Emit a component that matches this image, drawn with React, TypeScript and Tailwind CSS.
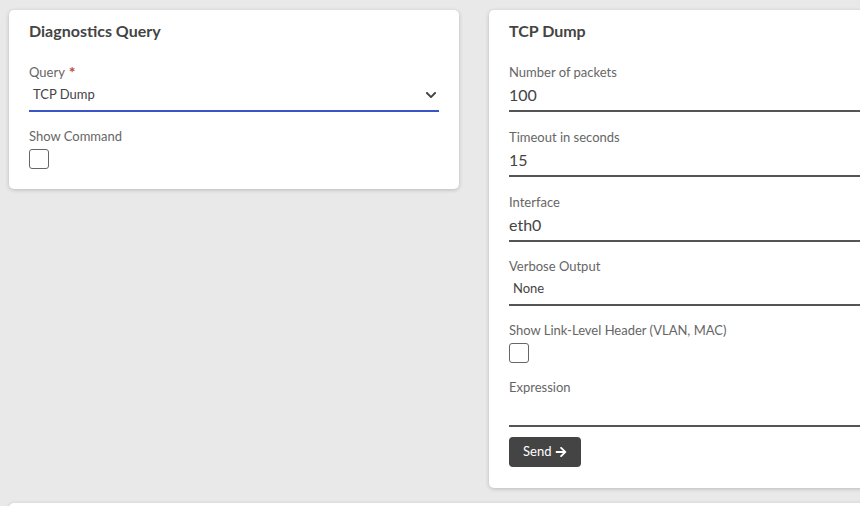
import React from 'react';
import { FaArrowRight, FaChevronDown } from 'react-icons/fa';

const font = { fontFamily: 'Lato, "Noto Sans", sans-serif' };

function Label({ text, required }: { text: string; required?: boolean }) {
  return (
    <div className="flex h-[18px] items-center text-[13px] leading-[18px] text-[#666]">
      {text}
      {required && <span className="ml-1 text-[16px] font-bold leading-[18px] text-[#b94a48]">*</span>}
    </div>
  );
}

function TextField({ label, value, className = '' }: { label: string; value: string; className?: string }) {
  return (
    <div className={className}>
      <Label text={label} />
      <div className="flex h-[31px] items-center border-b-2 border-[#555] pb-[2px] text-[16px] text-[#444]">
        {value}
      </div>
    </div>
  );
}

function SelectField({
  label,
  value,
  required,
  focused,
  className = '',
}: {
  label: string;
  value: string;
  required?: boolean;
  focused?: boolean;
  className?: string;
}) {
  return (
    <div className={className}>
      <Label text={label} required={required} />
      <div
        className={
          'flex h-[31px] items-center justify-between border-b-2 pb-[2px] pl-1 pr-[2px] text-[13px] text-[#444] ' +
          (focused ? 'border-[#3b55c9]' : 'border-[#555]')
        }
      >
        <span>{value}</span>
        {focused && <FaChevronDown className="text-[12px] text-[#444]" />}
      </div>
    </div>
  );
}

function Checkbox({ label, className = '' }: { label: string; className?: string }) {
  return (
    <div className={className}>
      <Label text={label} />
      <div className="mt-1 h-5 w-5 rounded-[3px] border border-[#666] bg-white" />
    </div>
  );
}

export default function App() {
  return (
    <div className="h-[506px] w-[860px] overflow-hidden bg-[#e9e9e9]" style={font}>
      <div className="flex items-start gap-[30px] pl-[9px] pt-[10px]">
        <div className="w-[450px] shrink-0 rounded-[5px] bg-white px-5 pb-5 pt-3 shadow-[0_1px_4px_rgba(0,0,0,0.2)]">
          <h2 className="text-[16px] font-bold leading-[18px] text-[#444]">Diagnostics Query</h2>
          <div className="mt-[23px] flex flex-col">
            <SelectField label="Query" value="TCP Dump" required focused />
            <Checkbox label="Show Command" className="mt-[15px]" />
          </div>
        </div>
        <div className="w-[450px] shrink-0 rounded-[5px] bg-white px-5 pb-[21px] pt-3 shadow-[0_1px_4px_rgba(0,0,0,0.2)]">
          <h2 className="text-[16px] font-bold leading-[18px] text-[#444]">TCP Dump</h2>
          <div className="mt-[23px] flex flex-col">
            <TextField label="Number of packets" value="100" />
            <TextField label="Timeout in seconds" value="15" className="mt-4" />
            <TextField label="Interface" value="eth0" className="mt-4" />
            <SelectField label="Verbose Output" value="None" className="mt-[15px]" />
            <Checkbox label="Show Link-Level Header (VLAN, MAC)" className="mt-[15px]" />
            <TextField label="Expression" value="" className="mt-[15px]" />
          </div>
          <button className="mt-[10px] flex h-[30px] items-center gap-1 rounded-[4px] bg-[#444] px-[14px] text-[13px] text-white">
            Send <FaArrowRight className="text-[12px]" />
          </button>
        </div>
      </div>
      <div className="ml-[9px] mt-[15px] h-[60px] w-[900px] rounded-[5px] bg-white shadow-[0_1px_4px_rgba(0,0,0,0.2)]" />
    </div>
  );
}
